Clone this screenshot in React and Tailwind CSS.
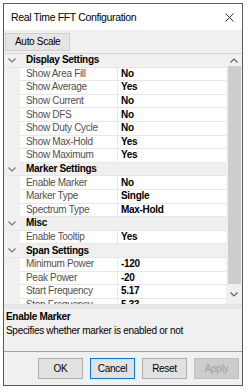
import React from 'react';

const sections = [
  {
    title: 'Display Settings',
    rows: [
      ['Show Area Fill', 'No'],
      ['Show Average', 'Yes'],
      ['Show Current', 'No'],
      ['Show DFS', 'No'],
      ['Show Duty Cycle', 'No'],
      ['Show Max-Hold', 'Yes'],
      ['Show Maximum', 'Yes'],
    ],
  },
  {
    title: 'Marker Settings',
    rows: [
      ['Enable Marker', 'No'],
      ['Marker Type', 'Single'],
      ['Spectrum Type', 'Max-Hold'],
    ],
  },
  {
    title: 'Misc',
    rows: [['Enable Tooltip', 'Yes']],
  },
  {
    title: 'Span Settings',
    rows: [
      ['Minimum Power', '-120'],
      ['Peak Power', '-20'],
      ['Start Frequency', '5.17'],
      ['Stop Frequency', '5.33'],
    ],
  },
];

const Chevron = ({ dir = 'down', className }) => (
  <svg width="8" height="5" viewBox="0 0 8 5" className={className}>
    <path
      d={dir === 'down' ? 'M0.5 0.5 L4 4 L7.5 0.5' : 'M0.5 4.5 L4 1 L7.5 4.5'}
      fill="none"
      stroke="currentColor"
      strokeWidth="1.2"
    />
  </svg>
);

const Category = ({ title }) => (
  <div className="flex h-[13.6px] items-center bg-[#f0f0f0] border-b border-[#e6e6e6]">
    <div className="w-4 flex justify-center text-[#777]">
      <Chevron />
    </div>
    <span className="pl-[6px] font-bold text-black">{title}</span>
  </div>
);

const Row = ({ name, value }) => (
  <div className="flex h-[13.6px]">
    <div className="w-4 bg-[#f0f0f0]" />
    <div className="w-[98px] pl-[6px] flex items-center border-b border-r border-[#e8e8e8] text-[#505050]">
      {name}
    </div>
    <div className="flex-1 pl-[3px] flex items-center border-b border-[#e8e8e8] font-bold text-black">
      {value}
    </div>
  </div>
);

const Button = ({ children, primary, disabled }) => (
  <button
    className={
      'w-[45px] h-[21px] border ' +
      (primary
        ? 'border-[#0078d7] bg-[#e1e1e1] text-black'
        : disabled
        ? 'border-[#bfbfbf] bg-[#cccccc] text-[#a0a0a0]'
        : 'border-[#adadad] bg-[#e1e1e1] text-black')
    }
  >
    {children}
  </button>
);

export default function App() {
  return (
    <div className="w-[251px] h-[392px] bg-white pt-[3px] pl-[3px] text-[10px] leading-none tracking-[-0.3px] font-['Liberation_Sans',Arial,sans-serif]">
      <div className="w-[240px] h-[383px] border border-[#5a5a5a] flex flex-col bg-[#f0f0f0]">
        {/* title bar */}
        <div className="h-[26px] bg-white flex items-center justify-between pl-[7px] pr-[8px]">
          <span className="text-[10.5px] text-black tracking-[-0.35px]">Real Time FFT Configuration</span>
          <svg width="9" height="9" viewBox="0 0 9 9">
            <path d="M0.5 0.5 L8.5 8.5 M8.5 0.5 L0.5 8.5" stroke="#333" strokeWidth="1" />
          </svg>
        </div>

        {/* toolbar */}
        <div className="h-[23px] flex items-center pl-[1px]">
          <button className="h-[18px] px-[9px] bg-[#e5e5e5] border border-[#cfcfcf] text-black">
            Auto Scale
          </button>
        </div>

        {/* property grid */}
        <div className="h-[251px] bg-white flex overflow-hidden border-t border-[#d9d9d9]">
          <div className="flex-1 overflow-hidden">
            {sections.map((s) => (
              <div key={s.title}>
                <Category title={s.title} />
                {s.rows.map(([n, v]) => (
                  <Row key={n} name={n} value={v} />
                ))}
              </div>
            ))}
          </div>
          <div className="w-4 bg-[#f0f0f0] flex flex-col items-center">
            <div className="h-[12px] flex items-center text-[#606060]">
              <Chevron dir="up" />
            </div>
            <div className="w-[13px] h-[218px] bg-[#cdcdcd]" />
            <div className="flex-1 flex items-center text-[#606060]">
              <Chevron />
            </div>
          </div>
        </div>

        {/* description */}
        <div className="h-[5px] bg-[#e6e6e6]" />
        <div className="h-[43px] pl-[2px] pt-[3px] border-b border-[#a0a0a0]">
          <div className="font-bold text-black">Enable Marker</div>
          <div className="mt-[4px] text-black">Specifies whether marker is enabled or not</div>
        </div>

        {/* buttons */}
        <div className="flex-1 flex items-center justify-end gap-[7px] pr-[3px]">
          <Button>OK</Button>
          <Button primary>Cancel</Button>
          <Button>Reset</Button>
          <Button disabled>Apply</Button>
        </div>
      </div>
    </div>
  );
}
